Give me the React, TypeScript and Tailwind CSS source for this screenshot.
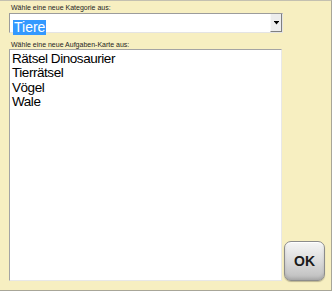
import React from "react";

export default function App() {
  const items = ["Rätsel Dinosaurier", "Tierrätsel", "Vögel", "Wale"];
  return (
    <div
      className="w-[332px] h-[291px] bg-[#f7efc1] border-t border-r border-b border-t-[#c4c0b0] border-r-[#a8a698] border-b-[#a8a698] flex flex-col pl-[9px] pr-[6px] overflow-hidden"
      style={{ fontFamily: '"Liberation Sans", Arial, sans-serif' }}
    >
      <div className="h-[12px] pt-[2px] pl-[2px] text-[7px] leading-[9px] text-[#1e1e1e]">
        Wähle eine neue Kategorie aus:
      </div>
      <div className="w-[274px] h-[20px] flex bg-white border border-t-[#9c9c9c] border-l-[#9c9c9c] border-b-[#e4e4e4] border-r-[#e4e4e4]">
        <div className="flex-1 pl-[3px] pt-[1px]">
          <span className="inline-block h-[15px] bg-[#3399ff] text-white text-[14px] leading-[15px] pl-[1px] pr-[1px]">
            Tiere
          </span>
        </div>
        <div className="w-[12px] h-[18px] bg-[#ededed] border-r border-b border-r-[#808080] border-b-[#808080] border-l border-l-[#f8f8f8] flex items-center justify-center">
          <svg width="5" height="4" viewBox="0 0 5 4">
            <rect x="0" y="0" width="5" height="1" fill="#000" />
            <polygon points="0.5,1 4.5,1 2.5,3.5" fill="#000" />
          </svg>
        </div>
      </div>
      <div className="h-[16px] pt-[7px] pl-[2px] text-[7px] leading-[9px] text-[#1e1e1e]">
        Wähle eine neue Aufgaben-Karte aus:
      </div>
      <div className="flex items-end gap-[2px]">
        <div className="w-[274px] h-[232px] bg-white border border-t-[#a4a4a4] border-l-[#a4a4a4] border-b-[#e8e8e8] border-r-[#e8e8e8] pt-[1.5px] pl-[2px]">
          {items.map((it) => (
            <div
              key={it}
              className="text-[13.5px] leading-[14.5px] text-black tracking-[-0.45px]"
            >
              {it}
            </div>
          ))}
        </div>
        <button className="w-[41px] h-[40px] rounded-[7px] border border-[#8c8c8c] bg-gradient-to-b from-[#f6f6f6] via-[#dcdcdc] to-[#bdbdbd] shadow-[inset_0_1px_0_#ffffff,inset_0_-2px_3px_rgba(0,0,0,0.12),0_1px_1px_rgba(0,0,0,0.25)] flex items-center justify-center text-[14px] font-bold text-[#1a1a1a]">
          OK
        </button>
      </div>
    </div>
  );
}
